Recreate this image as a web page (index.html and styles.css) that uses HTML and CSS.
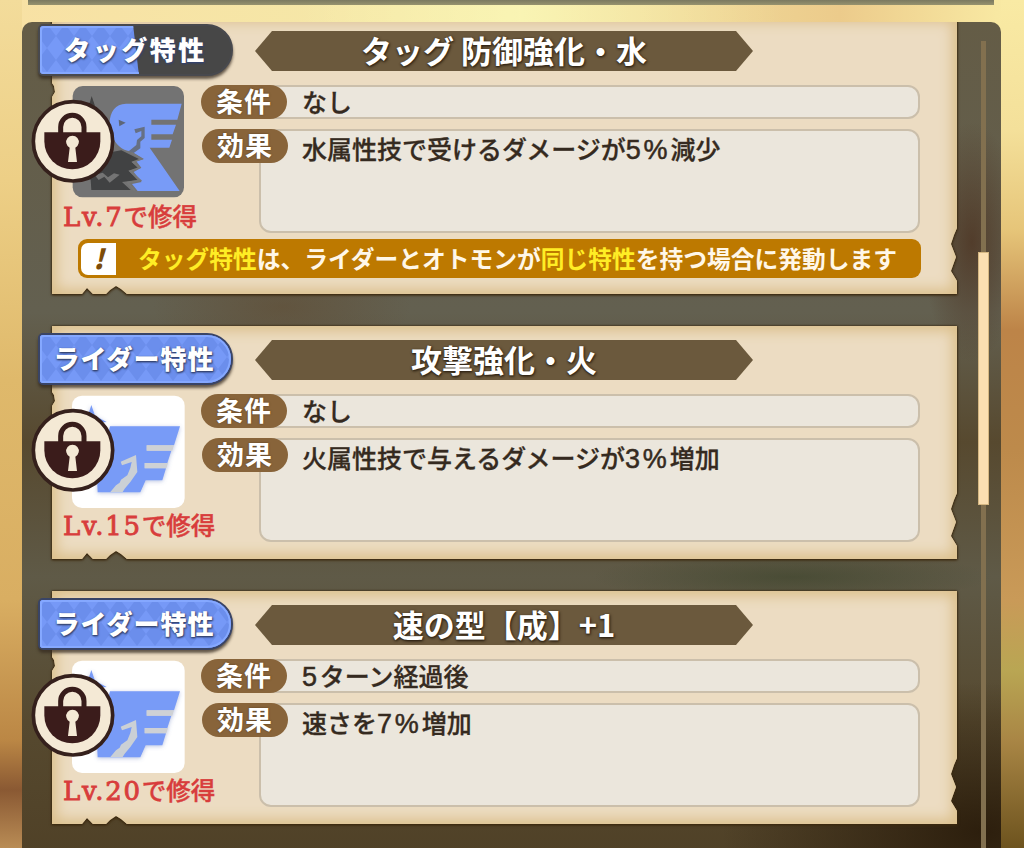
FILE: index.html
```html
<!DOCTYPE html>
<html lang="ja">
<head>
<meta charset="utf-8">
<title>特性</title>
<link rel="stylesheet" href="styles.css">
</head>
<body>
<svg class="defs" width="0" height="0" aria-hidden="true">
  <defs>
    <filter id="soft" x="-10%" y="-10%" width="120%" height="120%"><feDropShadow dx="0" dy="3" stdDeviation="7" flood-color="#5d74b8" flood-opacity=".45"/></filter>
    <pattern id="argyle" width="18" height="24" patternUnits="userSpaceOnUse">
      <rect width="18" height="24" fill="#7699f7"/>
      <path d="M9 0 L18 12 L9 24 L0 12Z" fill="#6b8eec"/>
    </pattern>
    <symbol id="lock" viewBox="0 0 495 366">
      <circle cx="135" cy="184" r="119" fill="#f4e9d5" stroke="#35201c" stroke-width="11"/>
      <path d="M98 160 V141 A35 35 0 0 1 168 141 V160" fill="none" stroke="#371c1a" stroke-width="15"/>
      <path d="M49 157 H217 V184 A84 84 0 0 1 49 184Z" fill="#3b1c1b"/>
      <path d="M125 203 A19 19 0 1 1 142 203 L147 246 H120Z" fill="#f4e9d5"/>
    </symbol>
    <symbol id="tag-mark" viewBox="0 0 495 366">
      <rect x="134" y="18" width="334" height="334" rx="30" fill="#737373"/>
      <path d="M183 76 L191 48 L201 78Z" fill="#414141"/>
      <path d="M245 128 C246 95 262 72 294 71 L461 71 L448 119 H370 V134 H444 L434 163 H370 V179 H432 L424 203 H365 L455 333 H329 L312 312 L341 306 L317 276 L340 263 L325 244 L348 237 L309 214 C280 212 262 191 255 172Z" fill="#789bf7"/>
      <path d="M272 119 L293 128 L274 139Z" fill="#5d6678"/>
      <path d="M319 148 L350 140 V174 L337 185 V205 L317 219 L302 214 L325 195 L327 180 L340 169 V153 L323 160Z" fill="#667084"/>
      <path d="M247 217 L280 211 L337 239 L311 246 L331 265 L302 272 L328 300 L282 306 L308 330 H190 L188 299 L160 291 L216 269Z" fill="#414243"/>
      <path d="M200 285 L224 278 L240 292 L258 280 L275 284 L245 308 L229 290 L212 300Z" fill="#747474"/>
      <path d="M310 218 L340 237 L315 246 L334 263 L306 273 L337 301 L299 308 L320 332" fill="none" stroke="#777" stroke-width="5"/>
    </symbol>
    <symbol id="rider-mark" viewBox="0 0 495 366">
      <rect x="132" y="20" width="338" height="337" rx="30" fill="#fff"/>
      <g filter="url(#soft)" fill="#789bf7">
        <path d="M179 82 L190 48 L201 80 L236 99 L205 101Z"/>
        <path d="M246 112 H456 L438 169 H356 V185 H430 L418 222 H350 V238 H414 L403 274 H353 L337 310 H209 L207 266Z"/>
        <path d="M278 218 L324 198 L328 249 L307 279 L290 299 L284 309 H247 L264 289 L275 281 L279 272 L298 259 L307 237 L311 219 L282 229Z" fill="#cbd0d5"/>
        <path d="M356 169 H438 L433 185 H356Z M350 222 H420 L415 238 H350Z" fill="#ced1d5"/>
      </g>
    </symbol>
  </defs>
</svg>

<div class="screen">
  <div class="upper-edge"></div>
  <main class="panel">
    <div class="list">

      <section class="card">
        <div class="paper"><div class="sheet"></div></div>
        <header class="head">
          <div class="badge tag"><svg class="weave" viewBox="0 0 195 52"><path d="M0 0H95L101 52H0Z" fill="url(#argyle)"/></svg><span>タッグ特性</span></div>
          <h2 class="banner"><span>タッグ 防御強化・水</span></h2>
        </header>
        <div class="body">
          <div class="trait">
            <svg class="emblem" viewBox="0 0 495 366"><use href="#tag-mark"/><use href="#lock"/></svg>
            <p class="level"><span class="lat">Lv.7</span>で修得</p>
          </div>
          <div class="details">
            <div class="row"><span class="pill">条件</span><p class="box">なし</p></div>
            <div class="row effect"><span class="pill">効果</span><p class="box">水属性技で受けるダメージが<span class="num">5%</span>減少</p></div>
          </div>
        </div>
        <p class="notice"><span class="alert">!</span><span class="message"><em>タッグ特性</em>は、ライダーとオトモンが<em>同じ特性</em>を持つ場合に発動します</span></p>
      </section>

      <section class="card">
        <div class="paper"><div class="sheet"></div></div>
        <header class="head">
          <div class="badge"><svg class="weave" viewBox="0 0 195 52"><rect width="195" height="52" fill="url(#argyle)"/></svg><span>ライダー特性</span></div>
          <h2 class="banner"><span>攻撃強化・火</span></h2>
        </header>
        <div class="body">
          <div class="trait">
            <svg class="emblem" viewBox="0 0 495 366"><use href="#rider-mark"/><use href="#lock"/></svg>
            <p class="level"><span class="lat">Lv.15</span>で修得</p>
          </div>
          <div class="details">
            <div class="row"><span class="pill">条件</span><p class="box">なし</p></div>
            <div class="row effect"><span class="pill">効果</span><p class="box">火属性技で与えるダメージが<span class="num">3%</span>増加</p></div>
          </div>
        </div>
      </section>

      <section class="card">
        <div class="paper"><div class="sheet"></div></div>
        <header class="head">
          <div class="badge"><svg class="weave" viewBox="0 0 195 52"><rect width="195" height="52" fill="url(#argyle)"/></svg><span>ライダー特性</span></div>
          <h2 class="banner"><span>速の型【成】+1</span></h2>
        </header>
        <div class="body">
          <div class="trait">
            <svg class="emblem" viewBox="0 0 495 366"><use href="#rider-mark"/><use href="#lock"/></svg>
            <p class="level"><span class="lat">Lv.20</span>で修得</p>
          </div>
          <div class="details">
            <div class="row"><span class="pill">条件</span><p class="box"><span class="num">5</span>ターン経過後</p></div>
            <div class="row effect"><span class="pill">効果</span><p class="box">速さを<span class="num">7%</span>増加</p></div>
          </div>
        </div>
      </section>

    </div>
    <div class="scrollbar"><div class="thumb"></div></div>
  </main>
</div>
</body>
</html>
```
FILE: styles.css
```css
* { box-sizing: border-box; margin: 0; padding: 0; }

body {
  font-family: "Noto Sans CJK JP", sans-serif;
  color: #352a20;
}

.defs { display: block; position: absolute; }

.screen {
  width: 1024px;
  height: 848px;
  overflow: hidden;
  display: flex;
  flex-direction: column;
  background:
    linear-gradient(90deg, transparent 300px, rgba(255, 255, 190, .5) 520px, transparent 780px) 0 0 / 1024px 22px no-repeat,
    linear-gradient(#f3dc9b 0, #edcf86 180px, #dfb96b 380px, #d9ae62 600px, #bb8745 740px, #8a5933 790px, #b98c55 848px) 0 0 / 22px 100% no-repeat,
    linear-gradient(#f9eaa4 0, #f4e09a 130px, #e6c579 230px, #bd8448 330px, #bd8a4b 450px, #c99a58 600px, #b9a653 670px, #a98645 740px, #6d531e 848px) 100% 0 / 23px 100% no-repeat,
    linear-gradient(90deg, #f8e1a4, #f4eaa9 50%, #eccb8b 82%, #faeda6);
}

.upper-edge {
  flex: none;
  width: 966px;
  height: 5px;
  margin-left: 28px;
  background: linear-gradient(#7b7960, #96926e);
}

.panel {
  flex: 1;
  display: flex;
  width: 979px;
  min-height: 0;
  margin: 17px 0 0 22px;
  padding-left: 30px;
  overflow: hidden;
  border-radius: 10px 10px 0 0;
  background:
    radial-gradient(130px 50px at 260px 285px, rgba(94, 62, 30, .35), transparent),
    radial-gradient(50px 120px at 950px 220px, rgba(70, 38, 20, .6), transparent),
    radial-gradient(200px 25px at 770px 555px, rgba(52, 62, 36, .5), transparent),
    radial-gradient(260px 150px at 960px 810px, rgba(38, 24, 8, .85), transparent),
    linear-gradient(#645c46 0, #636050 290px, #57492f 420px, #5f5a47 555px, #56492f 700px, #4f4026 848px);
}

.list {
  flex: none;
  display: flex;
  flex-direction: column;
  gap: 32px;
  width: 905px;
  margin-top: -5px;
}

.card {
  position: relative;
  flex: none;
  display: flex;
  flex-direction: column;
  height: 233px;
  padding-top: 7px;
}

.card:first-child { height: 277px; }

.paper {
  position: absolute;
  inset: 0;
  filter: drop-shadow(0 0 1px #33230c) drop-shadow(0 1px 1px #3f2b10);
}

.sheet {
  height: 100%;
  background: #ecdcc2;
  box-shadow: inset 0 0 13px 5px #dcc08c;
  clip-path: polygon(
    0 0, 100% 0, 100% calc(100% - 66px), calc(100% - 3px) calc(100% - 59px),
    calc(100% - 6px) calc(100% - 50px), calc(100% - 1px) calc(100% - 37px),
    calc(100% - 6px) calc(100% - 23px), 100% calc(100% - 13px), 100% 100%,
    75px 100%, 69px calc(100% - 5px), 64px calc(100% - 8px), 58px calc(100% - 4px), 54px 100%,
    41px 100%, 38px calc(100% - 3px), 35px calc(100% - 6px), 30px 100%,
    0 100%, 0 80px, 3px 75px, 2px 69px, 0 66px);
}

.head {
  position: relative;
  flex: none;
  display: flex;
  gap: 22px;
  height: 52px;
  margin-left: -14px;
}

.badge {
  position: relative;
  width: 195px;
  height: 52px;
  overflow: hidden;
  border: 2px solid #394466;
  border-radius: 5px 26px 26px 5px;
  background: #7699f7;
  box-shadow: 0 3px 3px rgba(53, 43, 32, .75);
  color: #fff;
  font-weight: 900;
  font-size: 26px;
  line-height: 45px;
  letter-spacing: 1px;
  text-align: center;
  text-shadow: 0 1px 2px #34436f, 1px 1px 2px #34436f;
}

.badge span { position: relative; margin-right: 3px; }
.badge::after {
  content: "";
  position: absolute;
  inset: 0;
  border: 2px solid #85a8ff;
  border-radius: 3px 24px 24px 3px;
}

.weave { position: absolute; left: -2px; top: -2px; width: 195px; height: 52px; }

.tag {
  border-color: #48494e;
  background: #474747;
  letter-spacing: 2.5px;
}

.tag span { margin-right: 0; }

.tag::after { border-color: #85a8ff #595959 #85a8ff #85a8ff; clip-path: polygon(0 0, 93px 0, 99px 100%, 0 100%); }

.banner {
  width: 498px;
  height: 40px;
  margin-top: 7px;
  background: #6b593d;
  clip-path: polygon(0 50%, 17px 0, 481px 0, 100% 50%, 481px 100%, 17px 100%);
  color: #fff;
  font-weight: 700;
  font-size: 31px;
  line-height: 37px;
  text-align: center;
  text-shadow: 0 1px 2px #302415, 1px 1px 3px #302415;
  white-space: nowrap;
}

.body {
  position: relative;
  flex: none;
  display: flex;
  margin-left: -24px;
}

.trait { width: 173px; padding-top: 4px; }
.emblem { display: block; width: 165px; height: 122px; }

.level {
  padding-left: 35px;
  color: #d83d3c;
  font-weight: 500;
  font-size: 24.5px;
  line-height: 28px;
  white-space: nowrap;
  -webkit-text-stroke: .4px #d83d3c;
}

.lat {
  font-family: "DejaVu Serif", serif;
  font-size: 26px;
  letter-spacing: 1.7px;
  line-height: 1;
  -webkit-text-stroke: .9px #d83d3c;
}

.details {
  display: flex;
  flex-direction: column;
  gap: 10px;
  width: 719px;
  padding-top: 9px;
}

.row { display: flex; height: 34px; }

.pill {
  position: relative;
  z-index: 1;
  width: 86px;
  height: 34px;
  flex: none;
  border-radius: 17px;
  background: #88643a;
  color: #fff;
  font-weight: 700;
  font-size: 27px;
  line-height: 31px;
  letter-spacing: 1px;
  text-align: center;
  text-shadow: 0 0 2px #51381d;
}

.box {
  flex: 1;
  margin-left: -30px;
  padding-left: 43px;
  border: 2px solid #cbbfab;
  border-radius: 12px;
  background: #ebe6dc;
  font-weight: 500;
  font-size: 25px;
  line-height: 28px;
  -webkit-text-stroke: .3px #352a20;
}

.num {
  font-family: "Liberation Sans", sans-serif;
  font-size: 27px;
  letter-spacing: 2.8px;
  line-height: 1;
  -webkit-text-stroke: .5px #352a20;
}

.effect { height: 104px; padding-left: 1px; }
.effect .box { margin-left: -29px; padding-left: 41px; line-height: 34px; }

.notice {
  position: relative;
  display: flex;
  align-items: center;
  width: 843px;
  height: 39px;
  margin: 6px 0 0 26px;
  padding-left: 3px;
  border-radius: 9px;
  background: #bd7900;
  color: #fff7e8;
  font-weight: 700;
  font-size: 23.75px;
  line-height: 34px;
  white-space: nowrap;
}

.message { margin-top: -2px; }

.alert {
  width: 35px;
  height: 32px;
  margin-right: 22px;
  border-radius: 7px 0 0 7px;
  background: #fff;
  color: #7d4c08;
  font-style: italic;
  font-weight: 900;
  font-size: 27px;
  line-height: 29px;
  text-align: center;
}

.notice em { color: #ffed25; font-style: normal; }

.scrollbar {
  width: 11px;
  margin: 19px 0 0 21px;
  background: linear-gradient(#82704f, #82704f) 3px 0 / 5px 100% no-repeat;
}

.thumb {
  height: 253px;
  margin-top: 211px;
  border: 1px solid #d5b782;
  background: #fbdfb1;
}
```
